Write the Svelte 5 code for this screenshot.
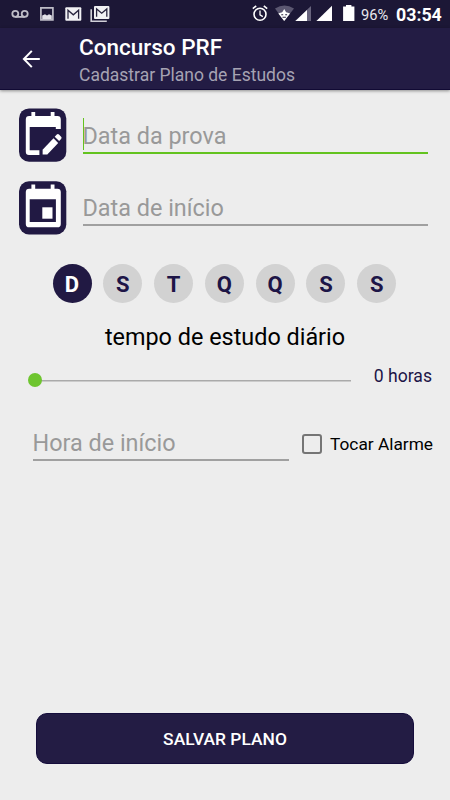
<script lang="ts">
	const days = ['D', 'S', 'T', 'Q', 'Q', 'S', 'S'];

	let selected = $state([true, false, false, false, false, false, false]);
	let hours = $state(0);
	let alarm = $state(false);

	const toggle = (i: number) => {
		selected[i] = !selected[i];
	};
</script>

<div class="screen">
	<div class="status">
		<svg class="left" width="112" height="28" viewBox="0 0 112 28">
			<g fill="none" stroke="#bebdc7" stroke-width="1.8">
				<circle cx="15.3" cy="13.8" r="3" />
				<circle cx="24.7" cy="13.8" r="3" />
				<path d="M15.3 16.9h9.4" />
				<path d="M40.9 7.9h12v12h-12z" stroke-width="1.7" />
			</g>
			<path d="M42.2 19v-3.6l2.8-1.2 2 1.2 2-1.2 2.8 1.2V19z" fill="#e3e2e8" />
			<rect x="65.3" y="7.2" width="16" height="13.6" rx="1" fill="#f1f1f4" />
			<path d="M68 18.8v-8.6l5.3 4.6 5.3-4.6v8.6" fill="none" stroke="#28243e" stroke-width="1.3" />
			<path d="M91.2 9.3v12h15.6" fill="none" stroke="#d0cfd7" stroke-width="1.6" />
			<rect x="94" y="6" width="15.4" height="13" rx="1" fill="#f1f1f4" />
			<path d="M96.6 16.8V9l5.1 4.2 5.1-4.2v7.8" fill="none" stroke="#28243e" stroke-width="1.3" />
		</svg>
		<svg class="right" width="106" height="28" viewBox="250 0 106 28">
			<g fill="none" stroke="#fff" stroke-width="1.6">
				<circle cx="260" cy="14.3" r="6" />
				<path d="M260 10.6v4.2l2.8 1.8" stroke-width="1.3" />
				<path d="M252.8 8.7l3.4-2.8M267.2 8.7l-3.4-2.8" />
			</g>
			<path d="M275 8.6q9.5-6.4 19 0L284.2 21z" fill="#5b5771" />
			<path d="M278.3 13.4l5.9 7.7 5.9-7.7q-5.9-2.2-11.8 0z" fill="#fff" />
			<path d="M281.3 14.7h1.9M285.2 14.7h1.9M282.5 17.2h3.4" stroke="#29243f" stroke-width="1.1" />
			<path d="M284.2 9l2.4 4h-4.8z" fill="#fff" />
			<path d="M311 6v15h-15.8z" fill="#68647d" />
			<path d="M307 10V21h-11.6z" fill="#fff" />
			<path d="M332 5.8V21h-15.6z" fill="#fff" />
			<path d="M346 5h5.4v1.6h3V21h-11.3V6.6h2.9z" fill="#fff" />
		</svg>
		<span class="battery">96%</span>
		<span class="clock">03:54</span>
	</div>

	<header>
		<svg class="back" width="18" height="18" viewBox="0 0 18 18">
			<path d="M9.8.9L1.9 9l7.9 8.1M2.2 9h15.6" />
		</svg>
		<div class="titles">
			<h1>Concurso PRF</h1>
			<p>Cadastrar Plano de Estudos</p>
		</div>
	</header>

	<main>
		<div class="date">
			<svg width="48" height="54" viewBox="0 0 48 54">
				<rect y=".4" width="47.3" height="53.3" rx="10" fill="#211943" />
				<path
					d="M12.4 4h3.8v4h15.5V4h3.8v4h2.9a3.4 3.4 0 0 1 3.4 3.4v9.7h-5V19H10.7v23.3h9.7v4.7H10a3.2 3.2 0 0 1-3.2-3.2V11.4A3.4 3.4 0 0 1 10.2 8h2.2z"
					fill="#fff"
				/>
				<path d="M23.6 46.6v-4.8l10.9-11.5 4.7 4.7-10.9 11.6z" fill="#fff" />
				<path d="M35.7 28.7l2.1-2.2q1.1-1 2.2 0l2.1 2.2q1.1 1.1 0 2.2l-2 2z" fill="#fff" />
			</svg>
			<div class="field focused"><i class="caret"></i>Data da prova</div>
		</div>
		<div class="date">
			<svg width="48" height="54" viewBox="0 0 48 54">
				<rect y=".2" width="47.3" height="53.3" rx="10" fill="#211943" />
				<path
					fill-rule="evenodd"
					d="M12.4 3.5h3.8v4.2h15.5V3.5h3.8v4.2h2.9a3.4 3.4 0 0 1 3.4 3.4v31.8a3.4 3.4 0 0 1-3.4 3.4H10.2a3.4 3.4 0 0 1-3.4-3.4V11.1a3.4 3.4 0 0 1 3.4-3.4h2.2zM10.7 18.3v22.8h26.2V18.3z"
					fill="#fff"
				/>
				<path d="M23.3 26.3h10.2v11.4H23.3z" fill="#fff" />
			</svg>
			<div class="field">Data de início</div>
		</div>

		<div class="days">
			{#each days as day, i}
				<button class="day" class:on={selected[i]} onclick={() => toggle(i)}>{day}</button>
			{/each}
		</div>

		<h2>tempo de estudo diário</h2>

		<div class="time">
			<div class="slider">
				<div class="thumb" style="margin-left: {(hours / 24) * 100}%"></div>
			</div>
			<span class="hours">{hours} horas</span>
		</div>

		<div class="start">
			<div class="field">Hora de início</div>
			<button class="check" onclick={() => (alarm = !alarm)}>
				<span class="box" class:checked={alarm}></span>
				<span>Tocar Alarme</span>
			</button>
		</div>
	</main>

	<button class="save">SALVAR PLANO</button>
</div>

<style>
	:global(body) {
		margin: 0;
	}
	.screen {
		display: flex;
		flex-direction: column;
		box-sizing: border-box;
		width: 450px;
		height: 800px;
		overflow: hidden;
		background: #ededed;
		font-family: Roboto, sans-serif;
		color: #000;
	}
	button {
		padding: 0;
		border: 0;
		background: none;
		font-family: inherit;
		color: inherit;
	}
	svg {
		display: block;
		flex: none;
	}
	.status {
		display: flex;
		align-items: center;
		height: 28px;
		background: #1c1736;
		color: #fff;
		white-space: nowrap;
	}
	.right {
		margin-left: 138px;
	}
	.battery {
		width: 29px;
		margin-left: 5px;
		font-size: 14.7px;
		line-height: 28px;
		padding-top: 2px;
		color: #e9e8ed;
	}
	.clock {
		margin-left: 6px;
		font-size: 17.8px;
		font-weight: 700;
		line-height: 28px;
		padding-top: 2px;
	}
	header {
		display: flex;
		align-items: center;
		height: 62px;
		flex: none;
		box-sizing: border-box;
		padding-left: 22px;
		background: #231c44;
		border-bottom: 1px solid #110a34;
		box-shadow: 0 1px 3px rgba(0, 0, 0, 0.4);
	}
	.back path {
		fill: none;
		stroke: #fff;
		stroke-width: 2;
	}
	.titles {
		margin-left: 39px;
		padding-top: 4px;
		white-space: nowrap;
	}
	h1 {
		margin: 0;
		font-size: 22.5px;
		font-weight: 500;
		line-height: 27px;
		color: #fff;
	}
	p {
		margin: 2px 0 0;
		font-size: 17.5px;
		line-height: 24px;
		color: #a6a3b3;
	}
	main {
		padding: 18px 17px 0 19px;
		flex: 1;
	}
	.date {
		display: flex;
		height: 54px;
		margin-bottom: 19px;
	}
	.field {
		position: relative;
		box-sizing: border-box;
		border-bottom: 2px solid #a0a0a0;
		font-size: 23.4px;
		color: #999;
		white-space: nowrap;
	}
	.date .field {
		width: 345.5px;
		height: 45px;
		margin-left: 15.5px;
		line-height: 54px;
	}
	.date .focused {
		height: 46px;
		border-color: #63c31f;
		line-height: 56px;
	}
	.caret {
		position: absolute;
		left: 0;
		top: 10px;
		width: 1px;
		height: 32px;
		background: #63c31f;
	}
	.days {
		display: flex;
		gap: 11.8px;
		padding: 10px 0 0 33.5px;
	}
	.day {
		width: 39px;
		height: 39px;
		border-radius: 50%;
		background: #d2d2d2;
		color: #1d1547;
		font-size: 22px;
		font-weight: 700;
		line-height: 41px;
	}
	.day.on {
		background: #211943;
		color: #fff;
	}
	h2 {
		margin: 18px 0 0;
		padding-right: 2px;
		font-size: 23.4px;
		font-weight: 400;
		line-height: 32px;
		text-align: center;
		white-space: nowrap;
	}
	.time {
		display: flex;
		align-items: center;
		justify-content: space-between;
		height: 40px;
		margin-top: 7px;
		padding-right: 1px;
	}
	.slider {
		display: flex;
		align-items: center;
		width: 316px;
		height: 14px;
		margin: 0 0 0 9px;
		padding-right: 7px;
		padding-bottom: 1px;
		background: linear-gradient(#aaa, #aaa) 7px 7px / 316px 1.5px no-repeat;
	}
	.thumb {
		width: 14px;
		height: 14px;
		border-radius: 50%;
		background: #6ec52f;
	}
	.hours {
		font-size: 17.6px;
		line-height: 24px;
		padding-bottom: 8px;
		color: #1d1547;
	}
	.start {
		display: flex;
		justify-content: space-between;
		margin: 26px 0 0 14px;
	}
	.start .field {
		width: 256px;
		height: 35px;
		margin-left: -0.5px;
		line-height: 35px;
	}
	.check {
		display: flex;
		align-items: center;
		gap: 8px;
		height: 35px;
		font-size: 17.3px;
		white-space: nowrap;
	}
	.box {
		box-sizing: border-box;
		width: 20px;
		height: 20px;
		border: 2px solid #757575;
		border-radius: 3px;
	}
	.box.checked {
		background: #6ec52f;
	}
	.save {
		width: 378px;
		height: 51px;
		flex: none;
		margin: 0 0 36px 36px;
		border: 1px solid #150d3c;
		border-radius: 11px;
		background: #231c44;
		color: #fff;
		font-size: 17.4px;
		font-weight: 500;
	}
</style>
